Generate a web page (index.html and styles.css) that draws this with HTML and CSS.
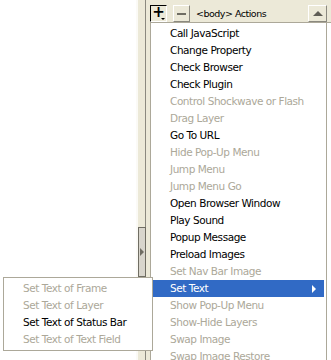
FILE: index.html
```html
<!DOCTYPE html>
<html lang="en">
<head>
    <meta charset="UTF-8">
    <meta name="viewport" content="width=device-width, initial-scale=1.0">
    <title>Behaviors - Actions menu</title>
    <link rel="stylesheet" href="styles.css">
</head>
<body>
  <div class="desk">
    <div class="page"></div>
    <div class="splitter">
      <div class="grip"><span class="grip-arrow"></span></div>
    </div>
    <div class="panel">
      <div class="toolbar">
        <button class="tool tool-add">+<span class="drop"></span></button>
        <button class="tool tool-remove"><span class="minus"></span></button>
        <span class="tag">&lt;body&gt; Actions</span>
        <button class="tool tool-up"><span class="up-arrow"></span></button>
      </div>
      <div class="list"></div>
    </div>
  </div>

  <!-- the "+" popup menu -->
  <ul class="menu main-menu">
    <li>Call JavaScript</li>
    <li>Change Property</li>
    <li>Check Browser</li>
    <li>Check Plugin</li>
    <li class="off">Control Shockwave or Flash</li>
    <li class="off">Drag Layer</li>
    <li>Go To URL</li>
    <li class="off">Hide Pop-Up Menu</li>
    <li class="off">Jump Menu</li>
    <li class="off">Jump Menu Go</li>
    <li>Open Browser Window</li>
    <li>Play Sound</li>
    <li>Popup Message</li>
    <li>Preload Images</li>
    <li class="off">Set Nav Bar Image</li>
    <li class="active has-sub">Set Text</li>
    <li class="off">Show Pop-Up Menu</li>
    <li class="off">Show-Hide Layers</li>
    <li class="off">Swap Image</li>
    <li class="off">Swap Image Restore</li>
  </ul>

  <ul class="menu sub-menu">
    <li class="off">Set Text of Frame</li>
    <li class="off">Set Text of Layer</li>
    <li>Set Text of Status Bar</li>
    <li class="off">Set Text of Text Field</li>
  </ul>
</body>
</html>
```

FILE: styles.css
```css
body{
    margin: 0;
    background-color: #fff;
    font-family: "DejaVu Sans", Verdana, sans-serif;
    font-size: 10.5px;
    overflow: hidden;
}

.desk{
    display: flex;
    width: 331px;
    height: 360px;
}
.page{
    width: 136px;
    background-color: #fff;
}

/* left collapse bar of the panel group */
.splitter{
    width: 14px;
    background: linear-gradient(to right, #fbfaf6 0 2px, #ece9d8 2px 9px, #8b897f 9px 10px, #ece9d8 10px);
}
.grip{
    margin: 227px 0 0 2px;
    width: 6px;
    height: 48px;
    border: 1px solid #6f6d63;
    background-color: #d8d5cc;
    display: flex;
    align-items: center;
    justify-content: center;
}
.grip-arrow{
    width: 0;
    height: 0;
    border-top: 4px solid transparent;
    border-bottom: 4px solid transparent;
    border-left: 4px solid #6f6d63;
}

.panel{
    flex: 1;
    display: flex;
    flex-direction: column;
    background-color: #ece9d8;
}
.toolbar{
    height: 22px;
    display: flex;
    align-items: flex-start;
    padding: 5px 4px 0 0;
    box-sizing: border-box;
    gap: 6px;
}
.tool{
    box-sizing: border-box;
    width: 17px;
    height: 17px;
    padding: 0;
    margin: 0;
    background-color: #ece9d8;
    border: 1px solid;
    border-color: #fff #8b897f #8b897f #fff;
    display: flex;
    align-items: center;
    justify-content: center;
    font-family: "DejaVu Sans", sans-serif;
}
.tool-add{
    position: relative;
    border-color: #000 #fff #fff #000;
    font-size: 15px;
    font-weight: bold;
    line-height: 1;
    padding-bottom: 2px;
}
.drop{
    position: absolute;
    right: 1px;
    bottom: 1px;
    border-left: 2px solid transparent;
    border-right: 2px solid transparent;
    border-top: 2px solid #000;
}
.minus{
    width: 9px;
    height: 2px;
    background-color: #6f6d63;
}
.tag{
    flex: 1;
    line-height: 17px;
    font-size: 9.5px;
    letter-spacing: -0.5px;
    color: #000;
}
.tool-up{
    width: 19px;
    height: 17px;
}
.up-arrow{
    border-left: 5px solid transparent;
    border-right: 5px solid transparent;
    border-bottom: 5px solid #5f5d55;
}
.list{
    flex: 1;
    background-color: #fff;
    border-top: 1px solid #aca899;
}

/* popup menus */
.menu{
    position: absolute;
    margin: 0;
    padding: 2px;
    list-style: none;
    background-color: #fff;
    border: 1px solid #aca899;
}
.menu li{
    height: 17px;
    line-height: 17px;
    padding-left: 17px;
    letter-spacing: -0.45px;
    color: #000;
    white-space: nowrap;
}
.menu li.off{
    color: #aca899;
}
.menu li.active{
    background-color: #316ac5;
    color: #fff;
}
.has-sub{
    position: relative;
}
.has-sub::after{
    content: "";
    position: absolute;
    right: 8px;
    top: 5px;
    border-top: 4px solid transparent;
    border-bottom: 4px solid transparent;
    border-left: 4px solid #fff;
}
.main-menu{
    left: 150px;
    top: 22px;
    width: 171px;
}
.sub-menu{
    left: 3px;
    top: 277px;
    width: 144px;
}
```
